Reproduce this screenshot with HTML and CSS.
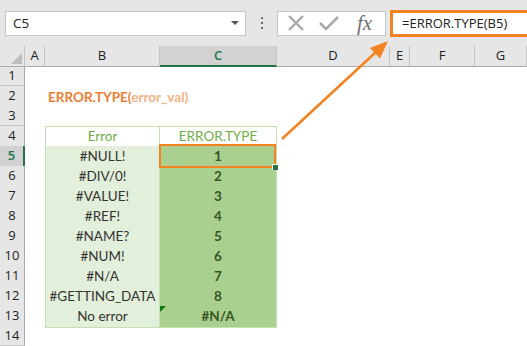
FILE: index.html
```html
<!DOCTYPE html>
<html lang="en">
<head>
  <meta charset="UTF-8">
  <title>ERROR.TYPE</title>
  <link rel="stylesheet" href="styles.css">
</head>
<body>
  <div class="ribbon">
    <div class="namebox">
      <span>C5</span>
      <span class="drop"></span>
    </div>
    <div class="dots"><i></i><i></i><i></i></div>
    <div class="fxbar">
      <svg class="ico" width="20" height="18" viewBox="0 0 20 18">
        <path d="M3 2 L17 16 M17 2 L3 16" stroke="#a8a8a8" stroke-width="2.4" fill="none"/>
      </svg>
      <svg class="ico" width="22" height="18" viewBox="0 0 22 18">
        <path d="M2 9 L8 15 L20 3" stroke="#a8a8a8" stroke-width="2.6" fill="none"/>
      </svg>
      <span class="fx">fx</span>
    </div>
    <div class="formula">=ERROR.TYPE(B5)</div>
  </div>

  <div class="sheet">
    <div class="row head">
      <div class="corner"></div>
      <div class="ch">A</div>
      <div class="ch">B</div>
      <div class="ch sel">C</div>
      <div class="ch">D</div>
      <div class="ch">E</div>
      <div class="ch">F</div>
      <div class="ch">G</div>
    </div>
    <div class="row"><div class="rh">1</div></div>
    <div class="row">
      <div class="rh">2</div>
      <div class="title">ERROR.TYPE(<span>error_val)</span></div>
    </div>
    <div class="row"><div class="rh">3</div></div>
    <div class="row">
      <div class="rh">4</div>
      <div class="cell b top th">Error</div>
      <div class="cell c top th">ERROR.TYPE</div>
    </div>
    <div class="row">
      <div class="rh sel">5</div>
      <div class="cell b">#NULL!</div>
      <div class="cell c active">1<span class="handle"></span></div>
    </div>
    <div class="row">
      <div class="rh">6</div>
      <div class="cell b">#DIV/0!</div>
      <div class="cell c">2</div>
    </div>
    <div class="row">
      <div class="rh">7</div>
      <div class="cell b">#VALUE!</div>
      <div class="cell c">3</div>
    </div>
    <div class="row">
      <div class="rh">8</div>
      <div class="cell b">#REF!</div>
      <div class="cell c">4</div>
    </div>
    <div class="row">
      <div class="rh">9</div>
      <div class="cell b">#NAME?</div>
      <div class="cell c">5</div>
    </div>
    <div class="row">
      <div class="rh">10</div>
      <div class="cell b">#NUM!</div>
      <div class="cell c">6</div>
    </div>
    <div class="row">
      <div class="rh">11</div>
      <div class="cell b">#N/A</div>
      <div class="cell c">7</div>
    </div>
    <div class="row">
      <div class="rh">12</div>
      <div class="cell b">#GETTING_DATA</div>
      <div class="cell c">8</div>
    </div>
    <div class="row">
      <div class="rh">13</div>
      <div class="cell b">No error</div>
      <div class="cell c flag">#N/A</div>
    </div>
    <div class="row"><div class="rh">14</div></div>
  </div>

  <svg class="arrow" width="527" height="346" viewBox="0 0 527 346">
    <line x1="282" y1="139" x2="376" y2="52" stroke="#f58220" stroke-width="2.5"/>
    <polygon points="388,41 380,58.5 370,48" fill="#f58220"/>
  </svg>
</body>
</html>
```

FILE: styles.css
```css
body {
  margin: 0;
  width: 527px;
  height: 346px;
  overflow: hidden;
  position: relative;
  background: #ffffff;
  font-family: "Open Sans", "Liberation Sans", sans-serif;
  color: #222;
}

/* formula bar */
.ribbon {
  height: 46px;
  background: #e6e6e6;
  display: flex;
  align-items: center;
  padding-left: 5px;
  box-sizing: border-box;
}

.namebox {
  width: 241px;
  height: 25px;
  box-sizing: border-box;
  background: #fff;
  border: 1px solid #c6c6c6;
  display: flex;
  align-items: center;
  justify-content: space-between;
  padding: 0 6px 0 7px;
  font-size: 13.5px;
}

.drop {
  width: 0;
  height: 0;
  border-left: 4px solid transparent;
  border-right: 4px solid transparent;
  border-top: 4px solid #555;
}

.dots {
  width: 31px;
  display: flex;
  flex-direction: column;
  align-items: center;
  gap: 3px;
}

.dots i {
  width: 2px;
  height: 2px;
  background: #6d6d6d;
}

.fxbar {
  width: 109px;
  height: 25px;
  box-sizing: border-box;
  background: #fff;
  border: 1px solid #c6c6c6;
  display: flex;
  align-items: center;
  padding-left: 8px;
  gap: 12px;
}

.fx {
  font-family: "Liberation Serif", serif;
  font-style: italic;
  font-size: 21px;
  color: #6e6e6e;
  margin-left: 5px;
}

.formula {
  flex: 1;
  margin-left: 4px;
  height: 27px;
  box-sizing: border-box;
  background: #fff;
  border: 3px solid #f58220;
  border-right: none;
  padding-left: 9px;
  font-size: 13px;
  line-height: 21px;
}

/* grid */
.row {
  display: grid;
  grid-template-columns: 25px 20px 115px 117px 113px 20px 65px 1fr;
  height: 20px;
}

.head .ch,
.corner {
  background: #e6e6e6;
  border-right: 1px solid #c4c4c4;
  border-bottom: 1px solid #ababab;
  box-sizing: border-box;
  font-size: 13px;
  text-align: center;
  line-height: 19px;
}

.corner {
  position: relative;
}

.corner::after {
  content: "";
  position: absolute;
  right: 2px;
  bottom: 2px;
  border-left: 11px solid transparent;
  border-bottom: 11px solid #bdbdbd;
}

.head .ch.sel {
  background: #d2d2d2;
  color: #217346;
  border-bottom: 2px solid #217346;
  font-weight: 600;
}

.rh {
  grid-column: 1;
  background: #e6e6e6;
  border-right: 1px solid #ababab;
  border-bottom: 1px solid #c8c8c8;
  box-sizing: border-box;
  font-size: 13px;
  text-align: center;
  line-height: 19px;
}

.rh.sel {
  background: #d2d2d2;
  color: #217346;
  font-weight: 600;
  border-right: 2px solid #217346;
}

.title {
  grid-column: 3;
  padding-left: 3px;
  white-space: nowrap;
  font-family: Lato, "Liberation Sans", sans-serif;
  font-size: 13.5px;
  font-weight: bold;
  line-height: 22px;
  color: #ed7d31;
}

.title span {
  color: #f4b183;
}

.cell {
  box-sizing: border-box;
  border-right: 1px solid #c6e0b4;
  border-bottom: 1px solid #c6e0b4;
  text-align: center;
  font-family: Lato, "Liberation Sans", sans-serif;
  font-size: 13.5px;
  line-height: 21px;
  position: relative;
}

.cell.b {
  grid-column: 3;
  background: #e2efda;
  border-left: 1px solid #c6e0b4;
  color: #333;
}

.cell.c {
  grid-column: 4;
  background: #a9d08e;
  color: #375623;
  font-weight: bold;
}

.cell.top {
  border-top: 1px solid #c6e0b4;
  line-height: 19px;
}

.cell.th {
  background: #fff;
  color: #70ad47;
  font-weight: normal;
}

.cell.active {
  z-index: 2;
}

.cell.active::before {
  content: "";
  position: absolute;
  left: -1px;
  top: -2px;
  right: 0;
  bottom: -1px;
  border: 2px solid #f58220;
}

.handle {
  position: absolute;
  right: -2px;
  bottom: -3px;
  width: 5px;
  height: 5px;
  background: #217346;
  border-left: 1px solid #fff;
  border-top: 1px solid #fff;
}

.cell.flag::after {
  content: "";
  position: absolute;
  left: 0;
  top: 0;
  border-top: 6px solid #0a7a0a;
  border-right: 6px solid transparent;
}

.arrow {
  position: absolute;
  left: 0;
  top: 0;
  pointer-events: none;
}
```
